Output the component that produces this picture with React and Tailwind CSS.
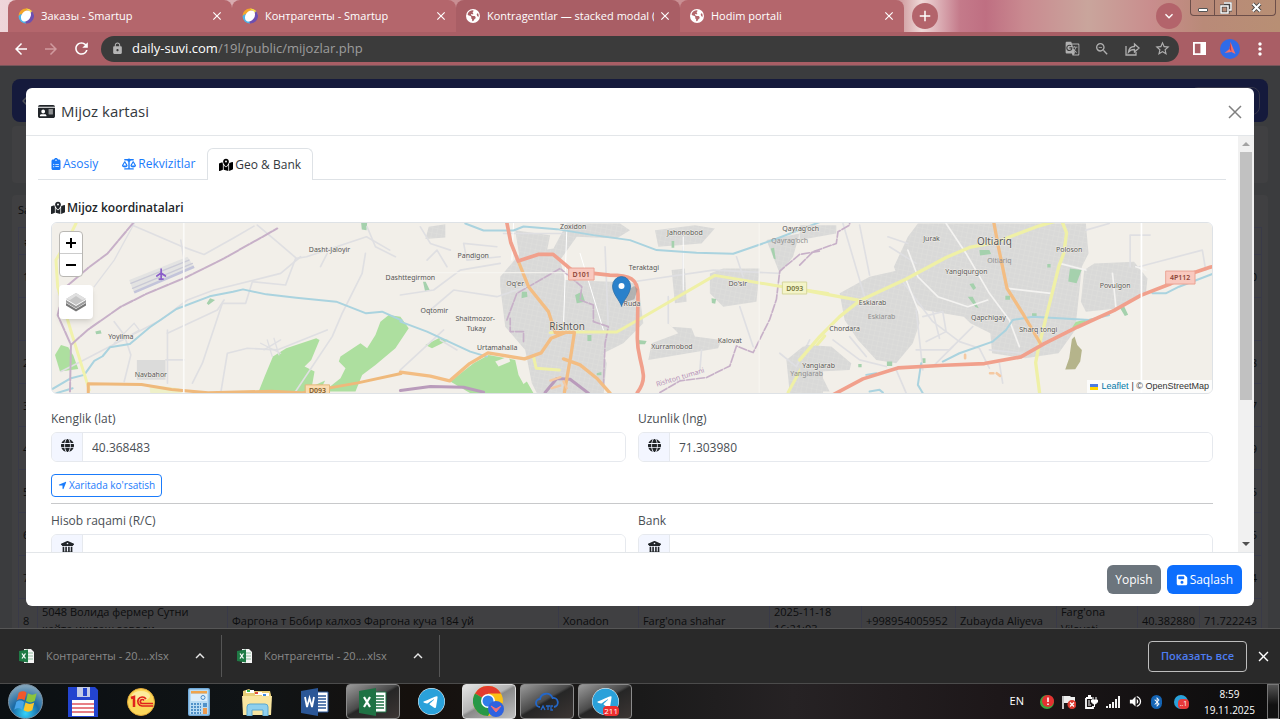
import React from 'react';
import {
  FaIdCard,
  FaClipboardList,
  FaScaleBalanced,
  FaMapLocationDot,
  FaGlobe,
  FaLocationArrow,
  FaBuildingColumns,
  FaFloppyDisk,
  FaBluetoothB,
  FaTelegram,
  FaEarthAmericas,
  FaChevronLeft,
} from 'react-icons/fa6';
import {
  MdArrowBack,
  MdArrowForward,
  MdRefresh,
  MdLock,
  MdGTranslate,
  MdZoomOut,
  MdStarBorder,
  MdMoreVert,
  MdClose,
  MdAdd,
  MdKeyboardArrowDown,
  MdKeyboardArrowUp,
  MdVolumeUp,
} from 'react-icons/md';

/* ---------- Browser chrome ---------- */

const browserTabs = [
  { title: 'Заказы - Smartup', icon: 'smartup' },
  { title: 'Контрагенты - Smartup', icon: 'smartup' },
  { title: 'Kontragentlar — stacked modal (', icon: 'globe', active: true },
  { title: 'Hodim portali', icon: 'globe' },
];

function SmartupIcon() {
  return (
    <svg viewBox="0 0 16 16" className="w-4 h-4 shrink-0">
      <path d="M8 .5a7.500 7.500 0 0 0-7.500 7.500l4-2L10 2 14 3A7.500 7.500 0 0 0 8 .5z" fill="#f4a62a" />
      <path d="M8 .5c4 0 7.500 3 7.500 6.500L12 4z" fill="#f2e04b" />
      <path d="M.5 8a7.500 7.500 0 0 0 7.500 7.500L10 12 3 6z" fill="#4fb4e8" />
      <path d="M8 15.500A7.500 7.500 0 0 0 14 3l-3 5-4 5z" fill="#6d4fb0" />
      <ellipse cx="8" cy="8" rx="4.500" ry="6" transform="rotate(35 8 8)" fill="#fff" />
    </svg>
  );
}

function TabStrip() {
  return (
    <div className="h-8 shrink-0 flex items-start pl-2 bg-[linear-gradient(90deg,#efd6da_0%,#c98f93_30%,#c98f93_70%,#efd9d8_72%,#c47a8a_75%,#bf6f82_77%,#c98a90_80%,#c9a59c_85%,#c98d8d_90%,#b98a78_94%,#b88f74_100%)]">
      {browserTabs.map((tab) => (
        <div
          key={tab.title}
          className={`h-8 w-56 min-w-0 flex items-center pl-[10px] pr-2 rounded-t-lg text-white text-[11px] ${
            tab.active ? 'bg-[#a95e65]' : 'bg-[#b4666c]'
          }`}
        >
          {tab.icon === 'smartup' ? <SmartupIcon /> : <FaEarthAmericas className="w-[14px] h-[14px] shrink-0" />}
          <span className="ml-[7px] flex-1 min-w-0 overflow-hidden whitespace-nowrap">{tab.title}</span>
          <button className="ml-1 shrink-0" aria-label="Close tab"><MdClose size={14} /></button>
        </div>
      ))}
      <button className="ml-2 mt-[3px] w-[26px] h-[26px] shrink-0 rounded-full bg-[#b3646b] text-white flex items-center justify-center" aria-label="New tab">
        <MdAdd size={18} />
      </button>
      <div className="flex-1" />
      <button className="mt-[3px] w-[26px] h-[26px] shrink-0 rounded-full bg-[#b3646b] text-white flex items-center justify-center" aria-label="Search tabs">
        <MdKeyboardArrowDown size={16} />
      </button>
      <div className="ml-2 mr-1 h-4 shrink-0 flex border border-t-0 border-[#6d4f4a] rounded-b text-white">
        <button className="w-6 flex items-center justify-center border-r border-[#6d4f4a]" aria-label="Minimize">
          <span className="w-[10px] h-1 mt-1 bg-white border border-[#555] rounded-[1px]" />
        </button>
        <button className="w-[22px] flex items-center justify-center border-r border-[#6d4f4a]" aria-label="Restore">
          <svg viewBox="0 0 12 12" className="w-3 h-3" fill="none">
            <path d="M4 1h7v7H9M1 4h7v7H1z" stroke="#444" strokeWidth="3" />
            <path d="M4 1h7v7H9M1 4h7v7H1z" stroke="#fff" strokeWidth="1.500" />
          </svg>
        </button>
        <button className="w-[38px] flex items-center justify-center" aria-label="Close window">
          <svg viewBox="0 0 12 12" className="w-[11px] h-[11px]" fill="none">
            <path d="M2 2l8 8M10 2l-8 8" stroke="#444" strokeWidth="4" />
            <path d="M2 2l8 8M10 2l-8 8" stroke="#fff" strokeWidth="2.200" />
          </svg>
        </button>
      </div>
    </div>
  );
}

function Toolbar() {
  return (
    <div className="h-[34px] shrink-0 flex items-center bg-[#a95e65] border-b border-[#77555a] pl-3 pr-[10px] text-white">
      <button aria-label="Back"><MdArrowBack size={18} /></button>
      <button className="ml-3 text-[#d09a9e]" aria-label="Forward"><MdArrowForward size={18} /></button>
      <button className="ml-3" aria-label="Reload"><MdRefresh size={19} /></button>
      <div className="ml-[10px] flex-1 h-[26px] rounded-full bg-[#3b3b3b] flex items-center pl-[10px] pr-2">
        <MdLock size={13} className="text-[#b5b5b5] shrink-0" />
        <div className="ml-2 flex-1 text-[13px] text-[#9d9d9d]">
          <span className="text-white">daily-suvi.com</span>/19l/public/mijozlar.php
        </div>
        <div className="flex items-center gap-[14px] text-[#b0b0b0]">
          <MdGTranslate size={15} />
          <MdZoomOut size={16} />
          <svg viewBox="0 0 16 16" className="w-4 h-4" fill="none" stroke="currentColor" strokeWidth="1.300">
            <path d="M2 5v9h10v-3" />
            <path d="M4.500 11c.5-4 2.500-5.500 6-5.500V3L15 7l-4.500 4V8.500c-3 0-4.500.5-6 2.500z" />
          </svg>
          <MdStarBorder size={17} />
        </div>
      </div>
      <button className="ml-[14px]" aria-label="Side panel">
        <svg viewBox="0 0 14 14" className="w-[13px] h-[13px]">
          <path d="M0 0h14v14H0zM2 2v10h6V2z" fill="#fff" fillRule="evenodd" />
        </svg>
      </button>
      <button className="ml-[14px]" aria-label="Profile">
        <svg viewBox="0 0 20 20" className="w-5 h-5">
          <circle cx="10" cy="10" r="10" fill="#2f6be8" />
          <path d="M10.500 3l5 12-4-2-7 1 5-4z" fill="#f0706a" />
          <path d="M10.500 3l1 10-2-3z" fill="#b93b4e" />
        </svg>
      </button>
      <button className="ml-[10px]" aria-label="Menu"><MdMoreVert size={20} /></button>
    </div>
  );
}

/* ---------- Page behind the modal ---------- */

const rows = [
  { n: '1', last: '0' },
  { n: '', last: '' },
  { n: '2', last: '8' },
  { n: '3', last: '7' },
  { n: '4', last: '9' },
  { n: '5', last: '5' },
  { n: '6', last: '5' },
  { n: '7', last: '4' },
];

const lastRow = [
  '5048 Волида фермер Сутни\nқайта ишлаш заводи',
  'Фаргона т Бобир калхоз Фаргона куча 184 уй',
  'Xonadon',
  "Farg'ona shahar",
  '2025-11-18\n16:21:03',
  '+998954005952',
  'Zubayda Aliyeva',
  "Farg'ona\nViloyati",
  '40.382880',
  '71.722243',
];

function Backdrop() {
  return (
    <div className="absolute inset-0 overflow-hidden bg-[#3b3c3e] px-3 pt-[13px] text-[11px] leading-[17px] text-[#0c0d0e]">
      <div className="h-[43px] rounded-lg bg-[#151a3c] px-2 flex items-center justify-between">
        <FaChevronLeft size={12} className="text-[#4e5058]" />
        <span className="h-7 w-[70px] rounded-lg border border-[#36374a]" />
      </div>
      <div className="mt-1 h-[57px] rounded bg-[#404042]" />
      <div className="mt-3 rounded bg-[#404042] px-[6px]">
        <div className="h-8 pt-[6px]">Sahifada</div>
        <table className="w-full table-fixed border-collapse">
          <colgroup>
            <col className="w-[19px]" />
            <col className="w-[190px]" />
            <col />
            <col className="w-[80px]" />
            <col className="w-[131px]" />
            <col className="w-[92px]" />
            <col className="w-[94px]" />
            <col className="w-[101px]" />
            <col className="w-[81px]" />
            <col className="w-[62px]" />
            <col className="w-[62px]" />
          </colgroup>
          <thead>
            <tr className="h-[27px]">
              <th className="border border-[#393a48]">#</th>
              <th colSpan={10} className="border border-[#393a48]"></th>
            </tr>
          </thead>
          <tbody>
            {rows.map((row, i) => (
              <tr key={i} className="h-[43px]">
                <td className="border border-[#393a48] px-1">{row.n}</td>
                <td colSpan={9} className="border border-[#393a48]"></td>
                <td className="border border-[#393a48] px-1 text-right">{row.last}</td>
              </tr>
            ))}
            <tr className="h-[43px]">
              <td className="border border-[#393a48] px-1">8</td>
              {lastRow.map((cell) => (
                <td key={cell} className="border border-[#393a48] px-1 whitespace-pre-line">{cell}</td>
              ))}
            </tr>
          </tbody>
        </table>
      </div>
    </div>
  );
}

/* ---------- Map ---------- */

const places = [
  ['Yoyilma', 120, 339],
  ['Navbahor', 150, 377],
  ['Dasht-Jaloyir', 329, 252],
  ['Dashttegirmon', 410, 280],
  ['Pandigon', 473, 258],
  ['Zoxidon', 573, 229],
  ['Jahonobod', 685, 235],
  ['Teraktagi', 644, 270],
  ["Oq'er", 515, 286],
  ['Oqtomir', 434, 313],
  ['Shaitmozor-', 475, 321],
  ['Tukay', 476, 331],
  ['Urtamahalla', 497, 350],
  ['Xurramobod', 672, 349],
  ['Kalovat', 730, 343],
  ['Ruda', 632, 306],
  ["Do'sir", 738, 286],
  ["Qayrag'och", 801, 231],
  ['Eskiarab', 873, 305],
  ['Chordara', 845, 331],
  ['Yangiarab', 819, 368],
  ['Jurak', 932, 241],
  ['Yangiqurgon', 967, 274],
  ['Qapchigay', 989, 320],
  ['Sharq tongi', 1039, 332],
  ['Poloson', 1070, 252],
  ['Povulgon', 1116, 288],
];

const fadedPlaces = [
  ["Qayrag'och", 790, 243],
  ['Eskiarab', 882, 319],
  ['Yangiarab', 807, 376],
  ['Oltiariq', 1000, 263],
];

function MapDrawing() {
  return (
    <svg
      viewBox="51 222 1162 172"
      preserveAspectRatio="xMidYMid slice"
      className="w-full h-full block"
      fill="none"
      strokeLinecap="round"
      strokeLinejoin="round"
      fontFamily="'Noto Sans', sans-serif"
    >
      <defs>
        <pattern id="streets" width="15" height="15" patternUnits="userSpaceOnUse" patternTransform="rotate(12)">
          <rect width="15" height="15" fill="#d9d9d8" />
          <path d="M0 0h15M0 0v15" stroke="#e3e2e0" strokeWidth="2" />
        </pattern>
      </defs>
      <rect x="51" y="222" width="1162" height="172" fill="#f2efe9" />

      {/* West */}
      <g transform="translate(0 130) scale(.33333)">
        <path d="M772 790l20-50 25-60 40-25 90-30 10 5-25 60-20 20 30 15-8 45 40-18-20 38z" fill="#addf9f" />
        <path d="M1200 560l-35-5-25 20-15 40-25 40-20-15-60 40-5 15 20 20-15 30-50 40h95l20-50 40-30 60-50 40-60z" fill="#addf9f" />
        <path d="M180 645l-18 30 15 50 55-8-15-40-15-25z" fill="#addf9f" />
        <path d="M618 520l10-15 15 5-20 15zM283 605l16-4 3 10-16 2zM1082 278h18l-2 22-14-2z" fill="#a5d1ad" />
        <path d="M408 690h86v60h-86z" fill="#dbdbda" />
        <path d="M385 450l175-70 20 30-180 80z" fill="#e3e3e2" />
        <path d="M445 765l90 10 15 25h-100z" fill="#eef0c8" />
        <g stroke="#dfdfe2" strokeWidth="5">
          <path d="M395 285l65 28 80 35 70 25 90-50 60-35M770 285l60 50 58 50 30-5 180-60 70 40" />
          <path d="M180 725l60-30 240-125 80-60 80-30 200-50 60-50M340 575l30 40 20 60-20 80M500 610l150-70 20-30M1095 370l-10 60-60 120-30 70-120 180" />
          <path d="M885 385l-30 80-100-10-20 65h-70l-60 180-30 60M1100 290l25 60 60 30M960 410l20-40M550 390l-10-60M500 600v160M550 690h-55M660 790l20-120 60-15 90 5 150-60" />
          <path d="M280 470l60-80 60-110M340 640l60-60 15 20-50 30zM780 640l60 30M790 660l50-30M800 630l15 50M820 625l15 50" strokeWidth="4" />
        </g>
        <path d="M390 460l175-70M395 475l180-75" stroke="#cacad6" strokeWidth="4" />
        <path d="M400 487l180-77" stroke="#c3c4da" strokeWidth="8" strokeLinecap="butt" />
        <path d="M150 780l60-35 40-10 30-42 25-14 22-27 60-10 60-50 80-55 100-38 70-14 30-7 70 15 90 10 120 12 90 35 48-5 60 27M150 785v10l65-20" stroke="#aad3df" strokeWidth="6" />
        <path d="M225 280l-25 50-35 60 5 80 45 150 50 160" stroke="#f1f2ac" strokeWidth="9" />
        <path d="M400 275l-80 95-60 45-70 60-20 80 40 90-3 140M210 645l50-45 100-70 80-40 120-50 110-55 160-90" stroke="#c7b0c8" strokeWidth="6" strokeDasharray="34 5" />
        <path d="M262 790v-28l160 2 90 15 110 10 190-5 90 5 170-30 130-28" stroke="#efb97b" strokeWidth="9" />
        <path d="M549 278v515" stroke="#fbfaf8" strokeWidth="5" />
        <path d="M481 417v31M468 438l13-9 13 9M475 447h12" stroke="#8b5fc9" strokeWidth="5" />
      </g>

      {/* Rishton and around */}
      <g transform="translate(400 210) scale(.33333)">
        <path d="M300 200l60-70 100-15 40-75 160 0 30 20-40 25-120-5-50 70 15 60 140 5 80 5 15 120-60 60-60 30 10 30-10 100 60 20 50 80h-310l25-60-40-80-20-100-60-70-15-120z" fill="url(#streets)" />
        <path d="M345 60l105 15-10 50-80 30zM85 50l50-8v40l-60 5zM765 60l120-15 60 10-40 45-130 10zM930 190l40-15h110l-10 100-100 15-40-40zM1100 90l100-20-20 70-40 50zM815 180l40-5 5 100-35 5z" fill="url(#streets)" />
        <path d="M755 400l80-30-30-30 10 10 60 5 10 25 80 10-10 25-90 15-120 20zM1160 450l50-40 60 20v120h-100z" fill="url(#streets)" />
        <path d="M150 515l70-55 45-25 80 15 10 45 30 55H210z" fill="#addf9f" />
        <path d="M75 405l40-20 30 5-30 15-20 10zM0 335l18 8L0 362zM360 530l20-15 20 35h-30z" fill="#addf9f" />
        <path d="M285 455l40-15 5 15-35 15z" fill="#f2efe9" />
        <path d="M525 255l20-10 10 30-25 5zM365 245l15 0 2 15-18 5zM815 93h8v20h-8zM1113 115l10-2 5 35-6-3zM68 215l8 0 12 25-14 3zM935 265l14 2-3 14-10-2zM562 375h12v18h-12zM715 390l25 3-5 10h-18zM590 490l14-4v10h-14z" fill="#a5d1ad" />
        <g stroke="#dfdfe2" strokeWidth="5">
          <path d="M0 255l100-15 80-60 120-20M90 300l70-60 130 20 90-30M0 480l130-120M170 420l-50-30M290 110l-100-10 10 50 100-10M60 50l30 50 60 20M80 150l30-30 30 50" />
          <path d="M700 215l240-35 200 10M850 110v110M615 110l10 250M1020 290l40 120M805 260v80M905 420l-5 60M1140 430l50 40 40-80M1010 140l20 60M310 70h180" />
        </g>
        <path d="M500 60l-10 290M850 80v160M540 130l70 230M340 40l-5 110" stroke="#fff" strokeWidth="3" />
        <path d="M195 40l55 21h90l30-12 100 8 110 18 110 15 80 30 120 8 110 3 130-45 130-50M0 335l80 30 130 60 50 15" stroke="#aad3df" strokeWidth="6" />
        <path d="M0 542l90-12 100 2 60 15" stroke="#b99bbb" strokeWidth="9" />
        <path d="M435 548l35-42 40 2 55 42" stroke="#b99bbb" strokeWidth="9" />
        <path d="M320 330l30-80 70-40 60-35 65 55-5 40 40 15v50l45 15-10 50-5 130M370 395v-30h-40v-40M780 548l60-35 80-10 70-35 20-60 50 20 30-60 20-40 20-60 10-85 60-50 60-10" stroke="#c7b0c8" strokeWidth="5" strokeDasharray="24 6" />
        <path d="M450 368l60-2h140l80-45 215-125 190 32 150 22M1165 548l60-110 50-60M400 440l8 35 70 5" stroke="#eff0a6" strokeWidth="9" />
        <path d="M355 155l30 75 60 75 20 62M0 487l90 12 58 14 60-52 55-32 110 18 50-18 30-44 45-18h25l-10 65-20 115M490 447l50 18 50 40 40 45M465 368h30" stroke="#f3bd83" strokeWidth="10" />
        <path d="M320 38l12 60 22 55 60-20h45l60 50 110 12c60 0 85 10 85 60l-2 130c0 50 12 60 18 110 2 25-8 40-18 53" stroke="#f1a08c" strokeWidth="11" />
        <path d="M451 512l30-10M455 535l25-8M490 515l10 20" stroke="#f5c9a2" strokeWidth="7" />
        <path d="M0 188h500M1078 40v508" stroke="#f8f6f2" strokeWidth="3" />
        <path d="M665 280l18-40 20-12 10 10-10 30z" fill="#8a8a8a" opacity=".5" />
      </g>

      {/* Oltiariq side */}
      <g transform="translate(800 130) scale(.33333)">
        <path d="M325 320l30-40h505l8 90-20 40-20 190-50 70-100 15-100-15-5-60-60-30-20-20-120-20-60-50-30-80z" fill="url(#streets)" />
        <path d="M855 420l30-20 120-5 40 50-5 50-80 40-100 10-15-30z" fill="url(#streets)" />
        <path d="M120 490l90-50 90-20 50 80 10 80-20 60-50 60-60-10-55-60-40-60zM0 660l20-15 75 5 60 50-5 20-90 5 30 60H0zM0 285h110v25L0 330z" fill="url(#streets)" />
        <path d="M820 590l10-15 50-10-60 30z" fill="#addf9f" />
        <path d="M812 415l35 5-15 40-25-6zM540 360l30 0 5 12-33 4zM505 500l15 0 18 35-10-4zM510 462l12-2 8 14-8 6zM963 535l12-6 12 25-10 4zM698 550h14v12h-14zM618 497h14v12h-14zM262 695h16v13h-16zM368 685h10v14h-10zM744 402h10v10h-10zM176 702h10v10h-10z" fill="#a5d1ad" />
        <path d="M818 628l8-8 8 25 14 15-5 35-15 23-30 1 12-35z" fill="#b5b48b" />
        <g stroke="#dfdfe2" strokeWidth="5">
          <path d="M130 280l65 220M180 285l30 150M270 350l80 50M265 320l60 20M860 300l70-20M993 410v-95h60M1020 410l190-50 10 60M310 455l90 120 80 60 60 20 30 60M350 540l20 180M370 560l60-15 10 60-60 30M400 545l20 80M460 650l-60 60M570 660l100 10M600 700l10 60" />
          <path d="M100 630l80 60 80 20M150 620l50 60M290 720l30 70M350 660h100l70-70" />
        </g>
        <path d="M440 280l60 90 70 120 60 80 30 80M325 360l30 80 60 60 90 30 60-20M625 475l130 15M780 400l80 20M940 430l10 100M1010 410l30 10M320 450l40 100" stroke="#f4f3f1" strokeWidth="5" />
        <path d="M200 735l30-5M430 695l50-25 100-35 40-35 20-30 60-10 80 5 90 5 60-15M1060 490h40l40-20 100-38M370 790l-15-25 10-65M210 785l30-5 10 8" stroke="#aad3df" strokeWidth="6" />
        <path d="M0 405l40-40 70-25 5-35 35-20v-10" stroke="#c7b0c8" strokeWidth="5" strokeDasharray="24 6" />
        <path d="M0 690l60-70 60-60 60-48 140-65 120-65 70-30 80-15 50-20 80-30 70-20M0 478l180 33M790 278l12 30-8 60-15 40-25 100-35 140-10 50 12 92" stroke="#eff0a6" strokeWidth="10" />
        <path d="M583 275l15 80 25 120 50 80 50 85" stroke="#f3bd83" strokeWidth="10" />
        <path d="M100 795l90-48 105-33 140-8 120-5 110-20 70-40 100-50 110-50 80-45 90-35 60-30 60-20 65-12" stroke="#f1a08c" strokeWidth="11" />
        <path d="M1027 278v515" stroke="#fff" strokeWidth="5" />
        <path d="M572 730h10M592 730l10 8M497 675v10" stroke="#f5c9a2" strokeWidth="8" />
      </g>

      {/* Road shields */}
      <g fontSize="7" fontWeight="600" textAnchor="middle">
        <rect x="569" y="268" width="25" height="12" fill="#f9c9bf" stroke="#eba394" />
        <text x="581" y="277" fill="#8d4538">D101</text>
        <rect x="783" y="282" width="24" height="12" fill="#f4f4c8" stroke="#d6d79b" />
        <text x="795" y="291" fill="#76763c">D093</text>
        <rect x="305" y="385" width="24" height="12" fill="#fbdcb0" stroke="#e4b87c" />
        <text x="317" y="393" fill="#7d592a">D093</text>
        <rect x="1167" y="271" width="29" height="13" fill="#f9c9bf" stroke="#eba394" />
        <text x="1181" y="280" fill="#8d4538">4P112</text>
      </g>

      {/* Place names */}
      <g fontSize="7" textAnchor="middle" fill="#555" stroke="#f2efe9" strokeWidth="1" paintOrder="stroke">
        {places.map(([name, x, y]) => (
          <text key={name} x={x} y={y}>{name}</text>
        ))}
        <text x="995" y="245" fontSize="10">Oltiariq</text>
        <text x="567" y="330" fontSize="10">Rishton</text>
      </g>
      <g fontSize="7" textAnchor="middle" fill="#8e8e8e">
        {fadedPlaces.map(([name, x, y]) => (
          <text key={name} x={x} y={y}>{name}</text>
        ))}
      </g>
      <text x="657" y="387" fontSize="7" fill="#b48fb8" transform="rotate(-17 657 387)">Rishton tumani</text>

      {/* Marker */}
      <path d="M621.500 306c-2-6-9-12-9-20a9 9.500 0 0 1 18 0c0 8-7 14-9 20z" fill="#2a81cb" stroke="#2a6ea8" strokeWidth=".8" />
      <circle cx="621.500" cy="286" r="3" fill="#fff" />
    </svg>
  );
}

function MapPanel() {
  return (
    <div className="relative mt-[6px] h-[172px] rounded-md border border-[#dee2e6] overflow-hidden">
      <MapDrawing />
      <div className="absolute left-[7px] top-2 w-6 rounded-sm border border-[#b9b7b3] bg-white text-black">
        <button className="h-[22px] w-full flex items-center justify-center border-b border-[#ccc]" aria-label="Zoom in">
          <svg viewBox="0 0 10 10" className="w-[10px] h-[10px]"><path d="M5 0v10M0 5h10" stroke="#000" strokeWidth="2" /></svg>
        </button>
        <button className="h-[22px] w-full flex items-center justify-center" aria-label="Zoom out">
          <svg viewBox="0 0 10 10" className="w-[10px] h-[10px]"><path d="M0 5h10" stroke="#000" strokeWidth="2" /></svg>
        </button>
      </div>
      <button className="absolute left-[7px] top-[62px] w-[34px] h-[34px] rounded bg-white shadow-md flex items-center justify-center" aria-label="Layers">
        <svg viewBox="0 0 26 26" className="w-[26px] h-[26px]">
          <path d="M3 14l10 6 10-6v2.500l-10 6-10-6z" fill="#777" />
          <path d="M3 11l10 6 10-6v2.500l-10 6-10-6z" fill="#9c9c9c" />
          <path d="M13 16L3 10l10-6 10 6z" fill="#c6c6c6" />
          <path d="M13 4l10 6-4 1-6-4-6 4-4-1z" fill="#e0e0e0" />
        </svg>
      </button>
      <div className="absolute right-0 bottom-0 h-[13px] px-[3px] bg-white/80 flex items-center gap-[3px] font-['Liberation_Sans',sans-serif] text-[9px] text-[#333]">
        <svg viewBox="0 0 8 6" className="w-2 h-[6px]"><path d="M0 0h8v3H0z" fill="#4c7be1" /><path d="M0 3h8v3H0z" fill="#ffd500" /></svg>
        <a href="#leaflet" className="text-[#0078a8]">Leaflet</a>
        <span>| © OpenStreetMap</span>
      </div>
    </div>
  );
}

/* ---------- Modal ---------- */

function Field({ id, label, icon, value }) {
  return (
    <div>
      <label htmlFor={id} className="block h-[18px] leading-[18px] text-[12px] text-[#4a4f55]">{label}</label>
      <div className="mt-1 h-[30px] flex rounded-md border border-[#e6e9ee] overflow-hidden">
        <span className="w-[31px] shrink-0 bg-[#f3f6ff] border-r border-[#e6e9ee] flex justify-center pt-[6px] text-[13px] text-[#212529]">{icon}</span>
        <input id={id} defaultValue={value} className="flex-1 min-w-0 px-[9px] pt-px text-[12px] text-[#4a4f55] bg-white outline-none" />
      </div>
    </div>
  );
}

function ClientModal() {
  return (
    <div className="absolute left-[26px] right-[26px] top-[22px] bottom-[22px] flex flex-col rounded-md bg-white overflow-hidden text-[#212529]">
      <div className="h-12 shrink-0 border-b border-[#e3e6e9] flex items-center justify-between px-3">
        <h5 className="flex items-center gap-[6px] text-[15px] text-[#33383d]">
          <FaIdCard size={17} className="text-[#212529]" />
          Mijoz kartasi
        </h5>
        <button aria-label="Close">
          <svg viewBox="0 0 14 14" className="w-[14px] h-[14px]"><path d="M1 1l12 12M13 1L1 13" stroke="#808080" strokeWidth="1.500" /></svg>
        </button>
      </div>

      <div className="flex-1 min-h-0 flex">
        <div className="flex-1 min-w-0 overflow-hidden p-3">
          <div className="flex h-8 border-b border-[#dee2e6] text-[12px]">
            <button className="flex items-center gap-px px-3 text-[#1a7bfb]"><FaClipboardList />Asosiy</button>
            <button className="flex items-center gap-[2px] px-3 text-[#1a7bfb]"><FaScaleBalanced size={14} />Rekvizitlar</button>
            <button className="h-8 flex items-center gap-[2px] px-[11px] rounded-t-md border border-b-0 border-[#dee2e6] bg-white text-[#33383d]">
              <FaMapLocationDot size={14} className="text-black" />Geo &amp; Bank
            </button>
          </div>

          <div className="px-[13px]">
            <h6 className="mt-5 h-4 flex items-center gap-[2px] text-[12px] font-semibold">
              <FaMapLocationDot size={14} />Mijoz koordinatalari
            </h6>
            <MapPanel />
            <div className="mt-4 grid grid-cols-2 gap-x-3">
              <Field id="lat" label="Kenglik (lat)" icon={<FaGlobe />} value="40.368483" />
              <Field id="lng" label="Uzunlik (lng)" icon={<FaGlobe />} value="71.303980" />
            </div>
            <button className="mt-3 h-[23px] px-[6px] flex items-center gap-[2px] rounded border border-[#1a7bfb] text-[10px] text-[#1a7bfb]">
              <FaLocationArrow size={9} />Xaritada ko'rsatish
            </button>
            <hr className="mt-[6px] border-[#c8c9cb]" />
            <div className="mt-2 grid grid-cols-2 gap-x-3">
              <Field id="account" label="Hisob raqami (R/C)" icon={<FaBuildingColumns />} value="" />
              <Field id="bank" label="Bank" icon={<FaBuildingColumns />} value="" />
            </div>
          </div>
        </div>

        {/* Scrollbar */}
        <div className="w-4 shrink-0 bg-[#f1f1f1] flex flex-col items-center">
          <div className="h-4 flex items-center"><span className="border-x-4 border-b-4 border-x-transparent border-b-[#a3a3a3]" /></div>
          <div className="w-3 h-[248px] bg-[#c1c1c1]" />
          <div className="flex-1" />
          <div className="h-4 flex items-center"><span className="border-x-4 border-t-4 border-x-transparent border-t-[#505050]" /></div>
        </div>
      </div>

      <div className="h-[54px] shrink-0 border-t border-[#e3e6e9] flex items-center justify-end gap-[6px] px-3 text-[12px] text-white">
        <button className="h-[29px] px-2 rounded-md bg-[#6c757d]">Yopish</button>
        <button className="h-[29px] px-[9px] rounded-md bg-[#0d6efd] flex items-center gap-[2px]"><FaFloppyDisk />Saqlash</button>
      </div>
    </div>
  );
}

/* ---------- Downloads bar ---------- */

function ExcelFileIcon() {
  return (
    <svg viewBox="0 0 15 14" className="w-[15px] h-[14px] shrink-0">
      <path d="M5 0h7l3 3v11H5z" fill="#f5f5f5" />
      <path d="M9 4h5M9 7h5M9 10h5" stroke="#8fbf9f" strokeWidth="1" />
      <path d="M0 2l9-1.500v13L0 12z" fill="#1f7a45" />
      <path d="M3 4.500l3.500 5M6.500 4.500l-3.500 5" stroke="#fff" strokeWidth="1.300" />
    </svg>
  );
}

function DownloadItem() {
  return (
    <div className="flex items-center">
      <div className="w-[202px] flex items-center">
        <ExcelFileIcon />
        <span className="ml-3 flex-1 whitespace-nowrap text-[11px] text-[#8a8a8a]">Контрагенты - 20....xlsx</span>
        <button className="mr-3 text-[#e8e8e8]" aria-label="Options"><MdKeyboardArrowUp size={18} /></button>
      </div>
      <span className="w-px h-[42px] mr-[15px] bg-[#555]" />
    </div>
  );
}

function DownloadsBar() {
  return (
    <div className="h-[55px] shrink-0 flex items-center bg-[#292929] border-t border-[#565656] pl-[19px] pr-2">
      <DownloadItem />
      <DownloadItem />
      <div className="flex-1" />
      <button className="h-[31px] px-3 rounded border border-[#bdbdbd] text-[11px] font-semibold text-[#4d7df0]">Показать все</button>
      <button className="ml-2 text-white" aria-label="Close downloads"><MdClose size={17} /></button>
    </div>
  );
}

/* ---------- Taskbar ---------- */

function StartOrb() {
  return (
    <svg viewBox="0 0 36 36" className="w-[35px] h-[35px]">
      <defs>
        <radialGradient id="orb" cx="50%" cy="85%" r="80%">
          <stop offset="0" stopColor="#35d3fb" />
          <stop offset=".5" stopColor="#1b6aa5" />
          <stop offset="1" stopColor="#7fa3bb" />
        </radialGradient>
      </defs>
      <circle cx="18" cy="18" r="17.500" fill="url(#orb)" stroke="#7d93a3" strokeWidth="1" />
      <path d="M11 9c3-2 6-2 8 0l-2 8c-3-2-5-2-8 0z" fill="#f0592b" />
      <path d="M20.500 9.500c3 2 6 2 9 0l-2 8c-3 2-6 2-9 0z" fill="#8cc43c" />
      <path d="M8.500 18.500c3-2 5-2 8 0l-2 8c-3-2-5-2-8 0z" fill="#48a5ea" />
      <path d="M18 19c3 2 6 2 9 0l-2 8c-3 2-6 2-9 0z" fill="#fcc62b" />
    </svg>
  );
}

function FloppyIcon() {
  return (
    <svg viewBox="0 0 30 30" className="w-[30px] h-[30px]">
      <path d="M0 0h27l3 3v27H0z" fill="#2344cf" />
      <path d="M9 0h13v10H9z" fill="#c3cbe6" />
      <path d="M15 1h4v8h-4z" fill="#2344cf" />
      <path d="M4 13h22v16H4z" fill="#fff" />
      <path d="M4 17h22M4 21h22M4 25h22" stroke="#e0555e" strokeWidth="1.300" />
    </svg>
  );
}

function OneCIcon() {
  return (
    <svg viewBox="0 0 28 28" className="w-7 h-7">
      <circle cx="14" cy="14" r="13.500" fill="#fbd75b" stroke="#dfa738" />
      <ellipse cx="14" cy="8" rx="9" ry="5" fill="#fdeb9d" />
      <path d="M4 10l3-1v10" stroke="#e0221c" strokeWidth="2.500" fill="none" />
      <path d="M19 11a4.500 4.500 0 1 0-4 7h11M17 12.500a2 2 0 1 0-2 3h11" stroke="#e0221c" strokeWidth="1.700" fill="none" />
    </svg>
  );
}

function CalculatorIcon() {
  return (
    <svg viewBox="0 0 22 28" className="w-[22px] h-7">
      <rect width="22" height="28" rx="2" fill="#6fa9d8" />
      <rect x="1.500" y="1.500" width="19" height="25" fill="#b9dcf3" />
      <path d="M3 3h16v2.500H3z" fill="#f0a44a" />
      <path d="M3 6h16v7H3z" fill="#dceefa" />
      <circle cx="15" cy="9.500" r="2" fill="none" stroke="#4c8dc9" />
      <path d="M3 16h10M3 19h10M3 22h10M3 25h10" stroke="#5192c8" strokeWidth="2" strokeDasharray="2 1" />
      <path d="M15 15h4v4h-4z" fill="#5192c8" />
      <path d="M15 20h4v6h-4z" fill="#eb9a4f" />
    </svg>
  );
}

function ExplorerIcon() {
  return (
    <svg viewBox="0 0 30 28" className="w-[30px] h-7">
      <path d="M1 3l6-2 3 2h18l1 4v19H1z" fill="#e9cf78" />
      <path d="M4 2h8v3H4zM13 4h7v3h-7zM20 5h7v3h-7z" fill="#fff" />
      <path d="M5 2h3v2H5z" fill="#38b54a" />
      <path d="M13 4h3v2h-3z" fill="#e04a3d" />
      <path d="M21 6h3v2h-3z" fill="#3f8be0" />
      <path d="M0 8h30l-1 19H1z" fill="#f8e5a0" />
      <path d="M5 28V19q0-3 3-3h15q3 0 3 3v9h-5v-6H10v6z" fill="#8fd0ee" stroke="#5aa7d0" />
    </svg>
  );
}

function OfficeIcon({ color, children }) {
  return (
    <svg viewBox="0 0 28 28" className="w-7 h-7" fill="none">
      <path d="M15 4h12v20H15z" fill="#fff" stroke={color} />
      <path d="M17 8h8M17 11h8M17 14h8M17 17h8M17 20h8" stroke={color} strokeWidth="1.500" />
      <path d="M0 3l17-3v28L0 25z" fill={color} />
      {children}
    </svg>
  );
}

function ChromeIcon() {
  return (
    <svg viewBox="0 0 32 32" className="w-8 h-8">
      <circle cx="15" cy="15" r="15" fill="#fbc116" />
      <path d="M15 15L2 7.500A15 15 0 0 1 28 7.500H15z" fill="#e33b2e" />
      <path d="M15 15L2 7.500A15 15 0 0 0 15 30l6.500-11z" fill="#279847" />
      <circle cx="15" cy="15" r="7" fill="#fff" />
      <circle cx="15" cy="15" r="5.500" fill="#2f7de9" />
      <circle cx="23" cy="23" r="8" fill="#2e62e0" />
      <path d="M18 20l5 6 5-6-5 3z" fill="#f0707a" stroke="#f0707a" />
    </svg>
  );
}

function CloudIcon() {
  return (
    <svg viewBox="0 0 24 20" className="w-6 h-5" fill="none" stroke="#2467c7" strokeWidth="1.800">
      <path d="M5 15a4 4 0 0 1 0-8 6.500 6.500 0 0 1 12.500-1A4.500 4.500 0 0 1 19 15" />
      <path d="M6 18l2-4 2 4M11 14h4M13 14v4M18 14h-2v4h2" strokeWidth="1.300" />
    </svg>
  );
}

function TelegramIcon() {
  return (
    <span className="w-[27px] h-[27px] rounded-full bg-white">
      <FaTelegram size={27} className="text-[#2aa1da]" />
    </span>
  );
}

const apps = [
  { name: 'Commander', icon: <FloppyIcon />, look: 'idle' },
  { name: '1C', icon: <OneCIcon />, look: 'idle' },
  { name: 'Calculator', icon: <CalculatorIcon />, look: 'idle' },
  { name: 'Explorer', icon: <ExplorerIcon />, look: 'idle' },
  {
    name: 'Word',
    icon: <OfficeIcon color="#2b5797"><path d="M4 9l2 10 2.500-9 2.500 9 2-10" stroke="#fff" strokeWidth="1.800" /></OfficeIcon>,
    look: 'idle',
  },
  {
    name: 'Excel',
    icon: <OfficeIcon color="#1f7244"><path d="M5 9l6 10M11 9l-6 10" stroke="#fff" strokeWidth="2.200" /></OfficeIcon>,
    look: 'open',
  },
  { name: 'Telegram', icon: <TelegramIcon />, look: 'idle' },
  { name: 'Chrome', icon: <ChromeIcon />, look: 'active' },
  { name: 'ATS', icon: <CloudIcon />, look: 'open' },
  { name: 'Telegram work', icon: <TelegramIcon />, look: 'open', badge: '211' },
];

const looks = {
  idle: 'border-transparent',
  open: 'border-[#8b8b8b] bg-[linear-gradient(150deg,#9a9a9a,#4a4a4a_45%,#262626_50%,#3c3634)]',
  active: 'border-[#dedede] bg-[linear-gradient(150deg,#e5e5e5,#b5b5b5_45%,#8a8a8a_50%,#c0c0c0)]',
};

function Taskbar() {
  return (
    <div className="h-9 shrink-0 flex items-center bg-[linear-gradient(90deg,#0b0f12,#101416_20%,#15100d_32%,#1a1a1a_50%,#262224_62%,#1d1719_78%,#0c0c0c)] border-t border-[#4b4b4b] text-white">
      <button className="w-[50px] flex justify-center" aria-label="Start"><StartOrb /></button>
      <div className="ml-[6px] flex gap-1">
        {apps.map((app) => (
          <button key={app.name} aria-label={app.name} className={`relative w-[54px] h-[35px] border rounded-sm flex items-center justify-center ${looks[app.look]}`}>
            {app.icon}
            {app.badge && (
              <span className="absolute right-3 bottom-[2px] h-[10px] px-px rounded-sm bg-[#ee2e2e] text-[8px] leading-[10px]">{app.badge}</span>
            )}
          </button>
        ))}
      </div>
      <div className="flex-1" />
      <div className="flex items-center">
        <span className="text-[11px]">EN</span>
        <div className="ml-4 flex items-center gap-2">
          <svg viewBox="0 0 14 14" className="w-[14px] h-[14px]">
            <circle cx="7" cy="7" r="7" fill="#3da43c" />
            <circle cx="8" cy="6" r="6" fill="#e33131" />
            <path d="M8 2.500v4.500M8 8.500v1.500" stroke="#fff" strokeWidth="1.600" />
          </svg>
          <svg viewBox="0 0 14 14" className="w-[14px] h-[14px]">
            <path d="M1 1v13" stroke="#fff" strokeWidth="1.500" />
            <path d="M2 1h6l1 1h4v6H2z" fill="#eee" />
            <circle cx="10" cy="9.500" r="4.500" fill="#dd3a30" />
            <path d="M8 7.500l4 4M12 7.500l-4 4" stroke="#fff" strokeWidth="1.300" />
          </svg>
          <svg viewBox="0 0 14 14" className="w-[14px] h-[14px]" fill="none" stroke="#fff">
            <path d="M4 1h3M2 3h6M2 3v10h7v-2" strokeWidth="1.800" />
            <path d="M4 6h2M4 8h2M4 10h3" />
            <path d="M7.500 5h6v2l-2 2H9.500l-2-2z" fill="#fff" />
            <path d="M10.500 9v3M9 5V2M12 5V2" />
          </svg>
          <svg viewBox="0 0 14 14" className="w-[14px] h-[14px]">
            <path d="M0 11h2v2H0zM3 9h2v4H3zM6 7h2v6H6zM9 4h2v9H9zM12 1h2v12h-2z" fill="#f2f2f2" />
          </svg>
          <MdVolumeUp size={15} />
          <span className="w-[11px] h-[14px] rounded-full bg-[#1464b4] flex items-center justify-center"><FaBluetoothB size={10} /></span>
          <span className="relative w-[14px] h-[14px] ml-1 rounded-full bg-[#2aa1da]">
            <span className="absolute left-1 top-1 w-[11px] h-[10px] rounded-sm bg-[#e83a3a] text-[7px] leading-[10px] text-center">..1</span>
          </span>
        </div>
        <div className="ml-4 text-center text-[10px] leading-4">
          <div>8:59</div>
          <div>19.11.2025</div>
        </div>
        <div className="ml-3 mr-px w-3 h-[35px] border border-[#777] bg-[linear-gradient(180deg,#555,#111_60%)]" />
      </div>
    </div>
  );
}

export default function App() {
  return (
    <div className="h-screen w-full flex flex-col overflow-hidden font-['Open_Sans','Noto_Sans',sans-serif]">
      <TabStrip />
      <Toolbar />
      <div className="relative flex-1 min-h-0">
        <Backdrop />
        <ClientModal />
      </div>
      <DownloadsBar />
      <Taskbar />
    </div>
  );
}
